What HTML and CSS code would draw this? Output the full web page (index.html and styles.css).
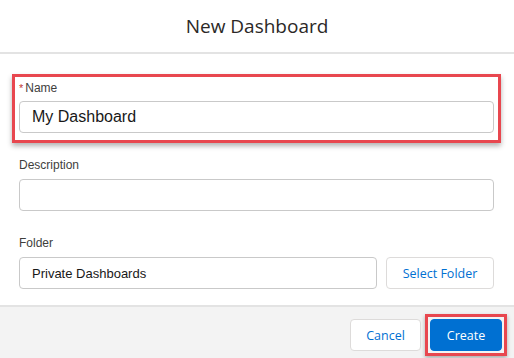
FILE: index.html
```html
<!DOCTYPE html>
<html>
<head>
<meta charset="UTF-8">
<title>New Dashboard</title>
<link rel="stylesheet" href="styles.css">
</head>
<body>
<div class="modal">
	<div class="header">
		<h2 class="title">New Dashboard</h2>
	</div>
	<div class="content">
		<div class="highlight">
			<label class="label"><span class="req">*</span>Name</label>
			<div class="input name-input">My Dashboard</div>
		</div>
		<div class="field">
			<label class="label">Description</label>
			<div class="input"></div>
		</div>
		<div class="field field-folder">
			<label class="label">Folder</label>
			<div class="folder-row">
				<div class="input folder-input">Private Dashboards</div>
				<button class="btn btn-neutral select-btn">Select Folder</button>
			</div>
		</div>
	</div>
	<div class="footer">
		<button class="btn btn-neutral">Cancel</button>
		<div class="highlight-btn">
			<button class="btn btn-brand">Create</button>
		</div>
	</div>
</div>
</body>
</html>
```

FILE: styles.css
```css
body {
	margin : 0;
	background : white;
	font-family : "Liberation Sans", Arial, sans-serif;
	color : #3e3e3c;
}
.modal {
	width : 514px;
	height : 358px;
	overflow : hidden;
	display : flex;
	flex-direction : column;
}
.header {
	height : 52px;
	border-bottom : 2px solid #e3e3e3;
	display : flex;
	align-items : center;
	justify-content : center;
}
.title {
	margin : 0;
	font-family : "Open Sans", sans-serif;
	font-weight : normal;
	font-size : 19px;
	color : #2b2826;
	padding-bottom : 1px;
}
.content {
	padding : 20px 20px 16px 12px;
}
.highlight {
	border : 3px solid #e8474f;
	padding : 2px 4px 7px 4px;
	margin-right : -7px;
	box-shadow : 0 3px 5px rgba(0,0,0,0.3);
}
.field {
	margin-top : 13px;
	padding-left : 7px;
}
.field-folder {
	margin-top : 23px;
}
.label {
	display : block;
	font-size : 12px;
	line-height : 18px;
	height : 18px;
	margin-bottom : 4px;
	color : #3e3e3c;
}
.field .label {
	margin-bottom : 5px;
}
.req {
	color : #c23934;
	margin-right : 2px;
	font-size : 11px;
	vertical-align : top;
}
.input {
	box-sizing : border-box;
	height : 32px;
	border : 1px solid #c9c9c9;
	border-radius : 4px;
	background : white;
	padding : 0 12px;
	display : flex;
	align-items : center;
	font-size : 13px;
	color : #181818;
}
.name-input {
	font-size : 16px;
}
.folder-row {
	display : flex;
	gap : 9px;
}
.folder-input {
	flex : 1;
}
.btn {
	box-sizing : border-box;
	height : 32px;
	border-radius : 4px;
	font-family : "Open Sans", sans-serif;
	font-size : 12.5px;
	padding : 0 16px;
	cursor : pointer;
}
.btn-neutral {
	background : white;
	border : 1px solid #dddbda;
	color : #0070d2;
}
.select-btn {
	width : 108px;
	padding : 0;
}
.btn-brand {
	background : #0070d2;
	border : 1px solid #0070d2;
	color : white;
	width : 72px;
	padding : 0;
}
.footer {
	flex : 1;
	background : #f3f3f3;
	border-top : 2px solid #e3e3e3;
	display : flex;
	justify-content : flex-end;
	align-items : center;
	gap : 4px;
	padding : 5px 7px 0 0;
}
.footer .btn-neutral {
	width : 71px;
	padding : 0;
}
.highlight-btn {
	border : 3px solid #e8474f;
	padding : 2px;
	display : flex;
	box-shadow : 0 2px 4px rgba(0,0,0,0.3);
}
```
